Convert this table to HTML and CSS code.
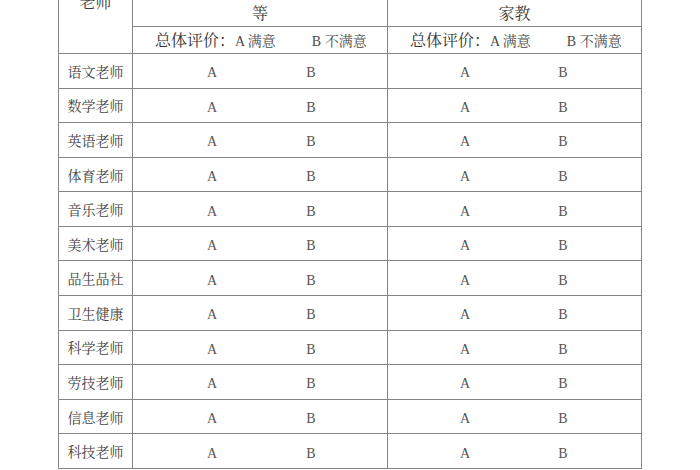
FILE: index.html
```html
<!DOCTYPE html>
<html lang="zh">
<head>
<meta charset="utf-8">
<title>评价表</title>
<link rel="stylesheet" href="styles.css">
</head>
<body>
<div class="sheet">
  <div class="cell head-teacher">老师</div>
  <div class="cell head-group">等</div>
  <div class="cell head-group">家教</div>
  <div class="cell sub left"><span class="sub-main"><b>总体评价：</b>A 满意</span><span class="sub-b">B 不满意</span></div>
  <div class="cell sub right"><span class="sub-main"><b>总体评价：</b>A 满意</span><span class="sub-b">B 不满意</span></div>

  <div class="cell name">语文老师</div>
  <div class="cell opts left"><span>A</span><span>B</span></div>
  <div class="cell opts right"><span>A</span><span>B</span></div>

  <div class="cell name">数学老师</div>
  <div class="cell opts left"><span>A</span><span>B</span></div>
  <div class="cell opts right"><span>A</span><span>B</span></div>

  <div class="cell name">英语老师</div>
  <div class="cell opts left"><span>A</span><span>B</span></div>
  <div class="cell opts right"><span>A</span><span>B</span></div>

  <div class="cell name">体育老师</div>
  <div class="cell opts left"><span>A</span><span>B</span></div>
  <div class="cell opts right"><span>A</span><span>B</span></div>

  <div class="cell name">音乐老师</div>
  <div class="cell opts left"><span>A</span><span>B</span></div>
  <div class="cell opts right"><span>A</span><span>B</span></div>

  <div class="cell name">美术老师</div>
  <div class="cell opts left"><span>A</span><span>B</span></div>
  <div class="cell opts right"><span>A</span><span>B</span></div>

  <div class="cell name">品生品社</div>
  <div class="cell opts left"><span>A</span><span>B</span></div>
  <div class="cell opts right"><span>A</span><span>B</span></div>

  <div class="cell name">卫生健康</div>
  <div class="cell opts left"><span>A</span><span>B</span></div>
  <div class="cell opts right"><span>A</span><span>B</span></div>

  <div class="cell name">科学老师</div>
  <div class="cell opts left"><span>A</span><span>B</span></div>
  <div class="cell opts right"><span>A</span><span>B</span></div>

  <div class="cell name">劳技老师</div>
  <div class="cell opts left"><span>A</span><span>B</span></div>
  <div class="cell opts right"><span>A</span><span>B</span></div>

  <div class="cell name">信息老师</div>
  <div class="cell opts left"><span>A</span><span>B</span></div>
  <div class="cell opts right"><span>A</span><span>B</span></div>

  <div class="cell name">科技老师</div>
  <div class="cell opts left"><span>A</span><span>B</span></div>
  <div class="cell opts right"><span>A</span><span>B</span></div>
</div>
</body>
</html>
```

FILE: styles.css
```css
html, body {
  margin: 0;
  padding: 0;
  background: #ffffff;
}

body {
  font-family: "Liberation Serif", "Noto Serif CJK SC", "Noto Sans CJK SC", serif;
  color: #444;
}

.sheet {
  display: grid;
  grid-template-columns: 73px 254px 253px;
  grid-template-rows: 39px 26px repeat(12, 33.58px);
  gap: 1px;
  background: #858585;
  border: 1px solid #858585;
  width: max-content;
  margin: -14px 0 0 58px;
}

.cell {
  background: #fff;
  display: flex;
  align-items: center;
  min-width: 0;
  overflow: hidden;
}

.head-teacher {
  grid-row: 1 / span 2;
  justify-content: center;
  align-items: flex-start;
  padding-top: 8px;
  font-size: 16px;
  line-height: 16px;
  color: #3a3a3a;
}

.head-group {
  justify-content: center;
  align-items: flex-end;
  padding-bottom: 4px;
  font-size: 16px;
  line-height: 16px;
  color: #3a3a3a;
}

.sub {
  font-size: 14px;
  line-height: 16px;
  padding-left: 22px;
  padding-top: 3px;
  color: #4a4a4a;
  white-space: nowrap;
}

.sub b {
  font-weight: normal;
  font-size: 16px;
  color: #333;
}

.sub-b {
  margin-left: 36px;
}

.name {
  justify-content: center;
  font-size: 14px;
  color: #444;
}

.opts {
  font-size: 14px;
  padding-top: 5px;
  color: #555;
}

.opts span {
  width: 20px;
  text-align: center;
}

.opts.left {
  padding-left: 69px;
  gap: 79px;
}

.opts.right {
  padding-left: 67px;
  gap: 78px;
}
```
